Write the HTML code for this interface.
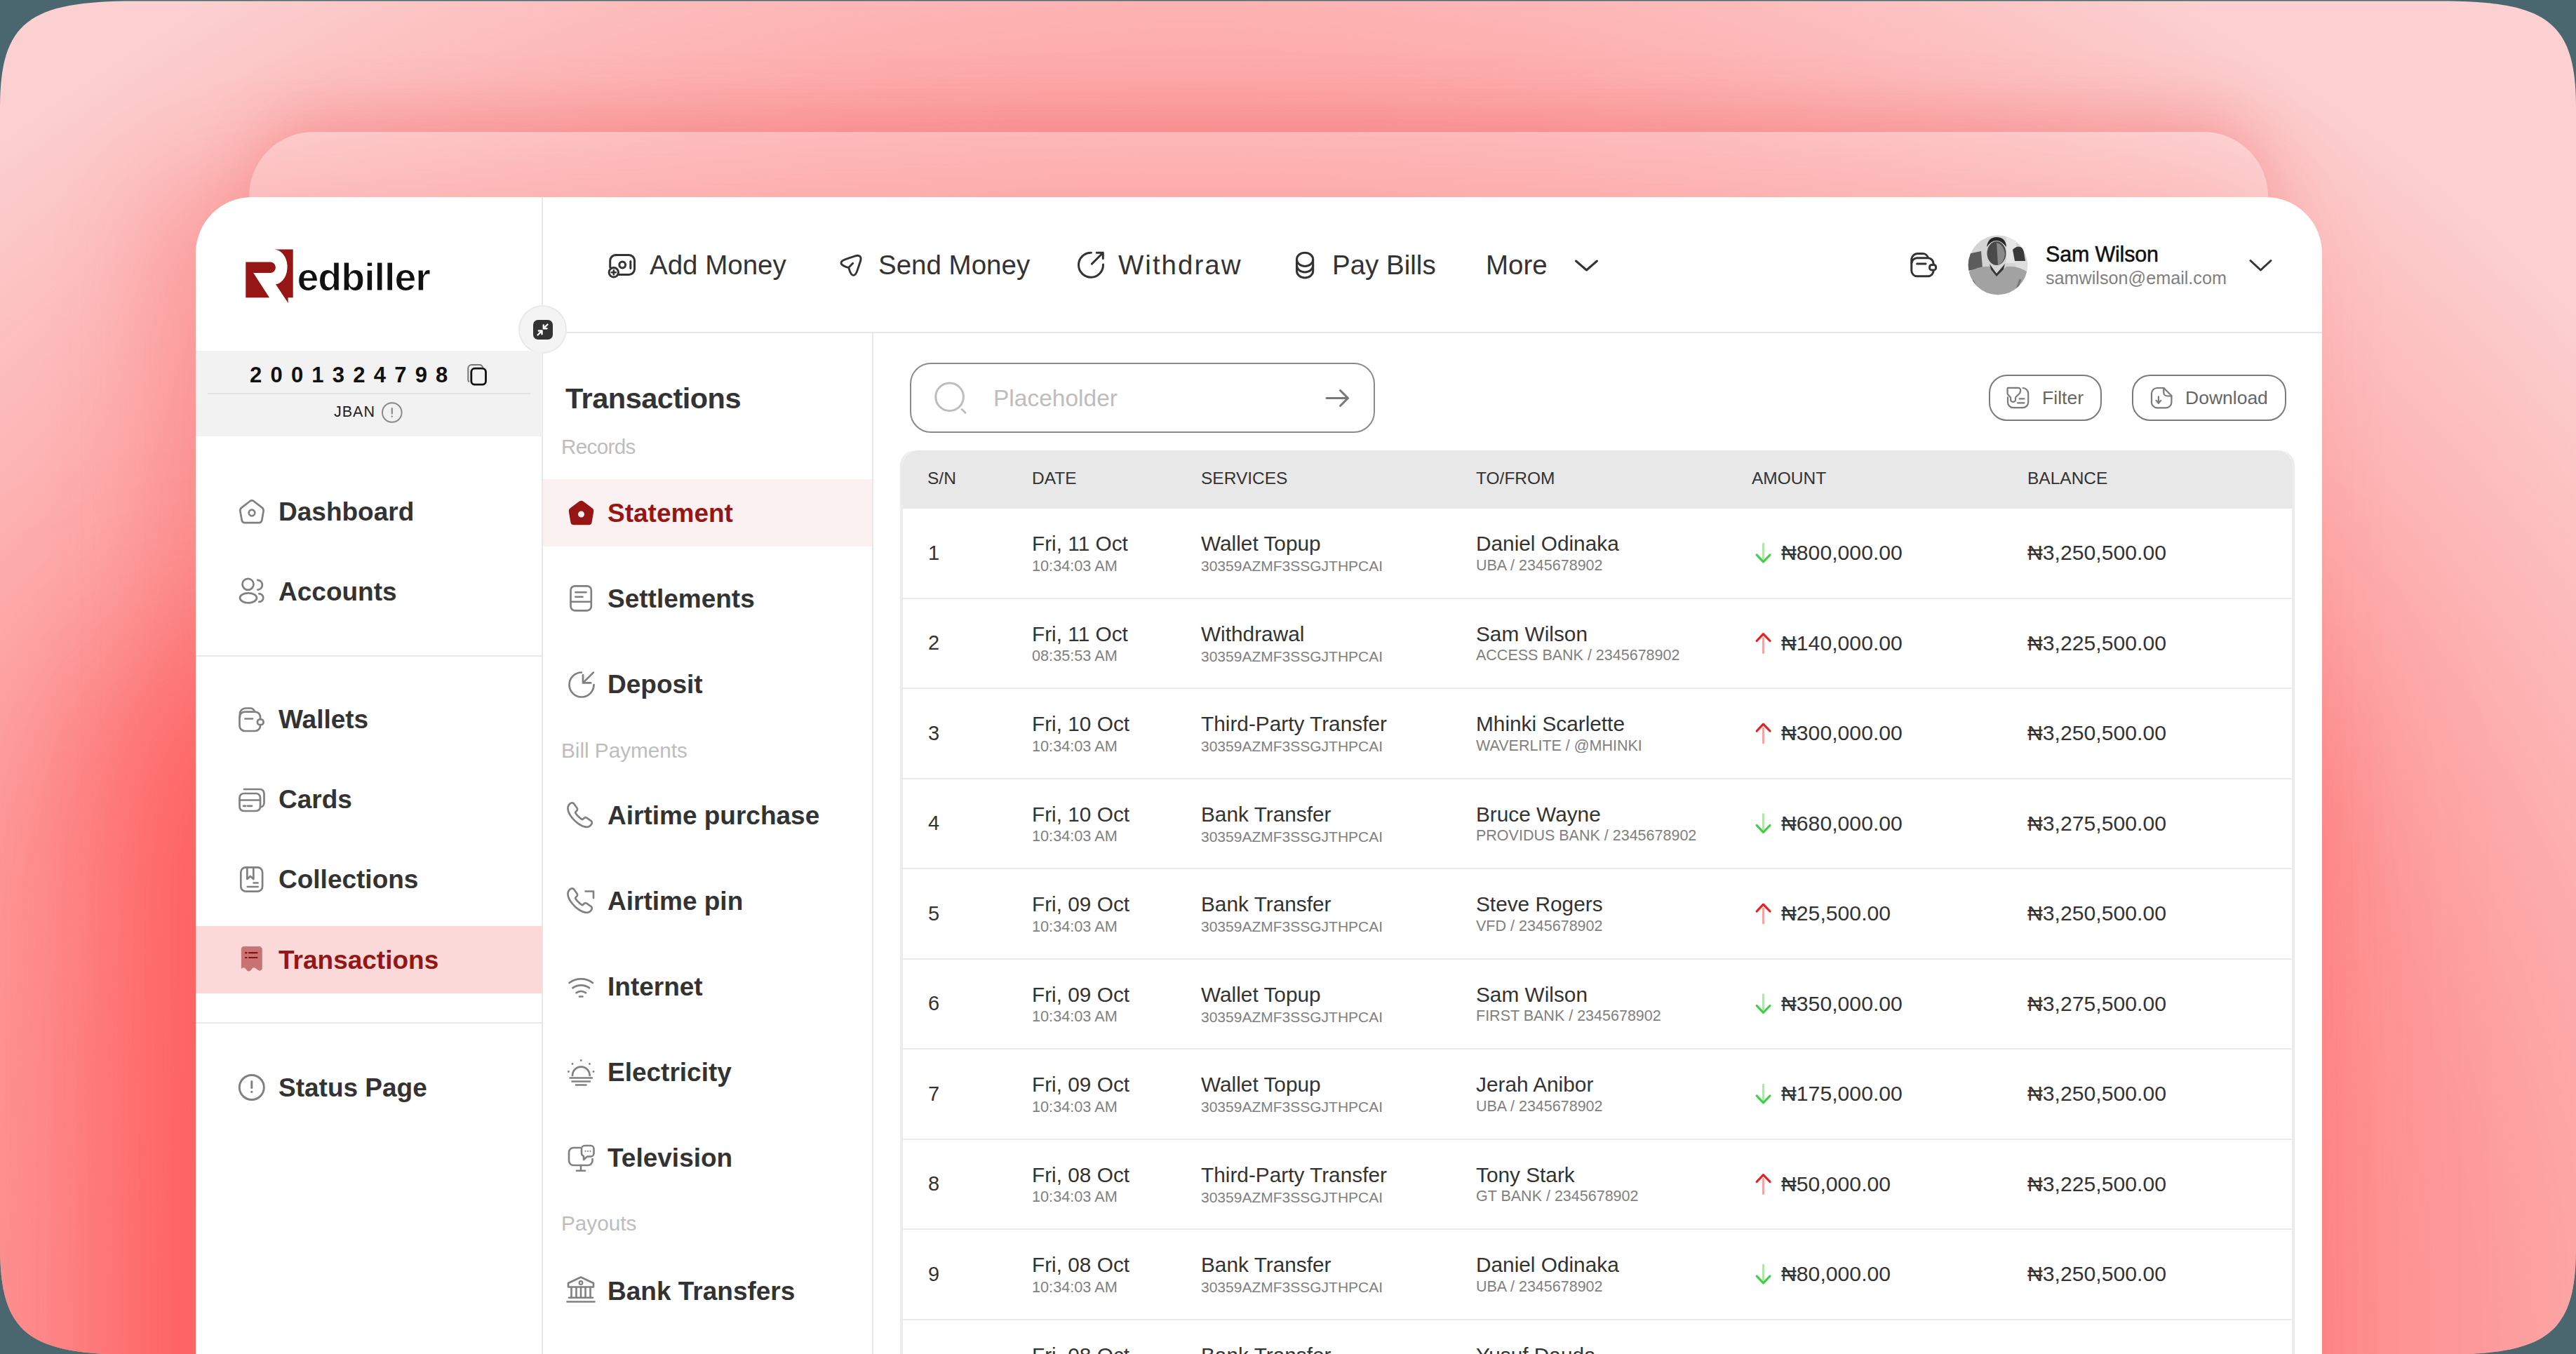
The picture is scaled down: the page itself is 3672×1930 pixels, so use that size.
<!DOCTYPE html>
<html><head><meta charset="utf-8"><style>
html,body{margin:0;padding:0;width:3672px;height:1930px;overflow:hidden;background:#4a676f;}
.t{position:absolute;white-space:nowrap;font-family:"Liberation Sans", sans-serif;}
</style></head><body>
<div style="position:absolute;left:0;top:0;width:3672px;height:1930px;clip-path:path('M0,154 C0,31 41,1.5 193,1.5 H3479 C3631,1.5 3672,31 3672,154 V1778 C3672,1901 3631,1931 3479,1931 H193 C41,1931 0,1901 0,1778 Z');background:#fcd5d5;overflow:hidden;"><div style="position:absolute;left:0;top:0;width:3672px;height:1930px;background:radial-gradient(ellipse 2600px 2300px at 1700px 1930px, rgba(255,96,96,0.95) 0%, rgba(255,96,96,0.5) 70.6%, rgba(255,96,96,0.04) 100%);"></div><div style="position:absolute;left:355px;top:188px;width:2878px;height:1900px;border-radius:92px;box-shadow:0 -40px 90px -20px rgba(235,80,80,0.32);"></div><div style="position:absolute;left:279px;top:281px;width:3031px;height:2000px;border-radius:80px;box-shadow:-110px 700px 300px 40px rgba(255,75,75,0.62), -60px -20px 140px 0px rgba(250,90,90,0.3);"></div><div style="position:absolute;left:355px;top:188px;width:2878px;height:1900px;border-radius:92px;background:rgba(255,245,245,0.28);"></div></div><div style="position:absolute;left:279px;top:281px;width:3031px;height:1800px;background:#fff;border-radius:80px;"></div><div style="position:absolute;left:772px;top:281px;width:2px;height:1700px;background:#e8e8e8;"></div><div style="position:absolute;left:774px;top:473px;width:2536px;height:2px;background:#e6e6e6;"></div><div style="position:absolute;left:1243px;top:475px;width:2px;height:1500px;background:#e8e8e8;"></div><svg style="position:absolute;left:340px;top:345px;" width="80" height="95" viewBox="0 0 80 95" fill="none"><path fill="#961616" d="M10.3 28.5 H46 A7.8 7.8 0 0 1 46 44 H21.2 L44 79.3 H10.3 Z"/><path fill="#961616" d="M50.5 10.5 H77.7 V79.3 H70.5 L70.8 87 L53 60.3 A19 25 0 0 0 50.5 10.5 Z"/></svg><div class="t" style="left:423.5px;top:368.0px;font-size:55.5px;line-height:55.5px;color:#111;font-weight:700;letter-spacing:-1.0px;-webkit-text-stroke:1.0px #fff;">edbiller</div><div style="position:absolute;left:741px;top:437px;width:65px;height:65px;background:#f4f4f4;border-radius:50%;box-shadow:0 0 0 2px #e9e9e9;"></div><div style="position:absolute;left:760px;top:456px;width:28px;height:28px;background:#333;border-radius:7px;"></div><div style="position:absolute;left:279px;top:500px;width:494px;height:122px;background:#f2f2f2;"></div><div style="position:absolute;left:296px;top:560px;width:460px;height:2px;background:#e2e2e2;"></div><div class="t" style="left:356.0px;top:518.8px;font-size:31px;line-height:31px;color:#111;font-weight:700;letter-spacing:1.8px;">2 0 0 1 3 2 4 7 9 8</div><div class="t" style="left:476.0px;top:576.8px;font-size:21.5px;line-height:21.5px;color:#222;font-weight:400;letter-spacing:1px;">JBAN</div><div style="position:absolute;left:279px;top:1320px;width:494px;height:96px;background:#fbd9d9;"></div><div style="position:absolute;left:279px;top:934px;width:494px;height:2px;background:#e8e8e8;"></div><div style="position:absolute;left:279px;top:1457px;width:494px;height:2px;background:#e8e8e8;"></div><div class="t" style="left:397.0px;top:710.7px;font-size:37px;line-height:37px;color:#333;font-weight:700;letter-spacing:0px;">Dashboard</div><div class="t" style="left:397.0px;top:824.7px;font-size:37px;line-height:37px;color:#333;font-weight:700;letter-spacing:0px;">Accounts</div><div class="t" style="left:397.0px;top:1006.7px;font-size:37px;line-height:37px;color:#333;font-weight:700;letter-spacing:0px;">Wallets</div><div class="t" style="left:397.0px;top:1120.7px;font-size:37px;line-height:37px;color:#333;font-weight:700;letter-spacing:0px;">Cards</div><div class="t" style="left:397.0px;top:1234.7px;font-size:37px;line-height:37px;color:#333;font-weight:700;letter-spacing:0px;">Collections</div><div class="t" style="left:397.0px;top:1349.7px;font-size:37px;line-height:37px;color:#961616;font-weight:700;letter-spacing:0px;">Transactions</div><div class="t" style="left:397.0px;top:1531.7px;font-size:37px;line-height:37px;color:#333;font-weight:700;letter-spacing:0px;">Status Page</div><div class="t" style="left:926.0px;top:359.4px;font-size:38.5px;line-height:38.5px;color:#333;font-weight:400;letter-spacing:0px;">Add Money</div><div class="t" style="left:1252.0px;top:359.4px;font-size:38.5px;line-height:38.5px;color:#333;font-weight:400;letter-spacing:0px;">Send Money</div><div class="t" style="left:1594.0px;top:359.4px;font-size:38.5px;line-height:38.5px;color:#333;font-weight:400;letter-spacing:2.0px;">Withdraw</div><div class="t" style="left:1899.0px;top:359.4px;font-size:38.5px;line-height:38.5px;color:#333;font-weight:400;letter-spacing:0px;">Pay Bills</div><div class="t" style="left:2118.0px;top:359.4px;font-size:38.5px;line-height:38.5px;color:#333;font-weight:400;letter-spacing:0px;">More</div><div class="t" style="left:2916.0px;top:347.2px;font-size:30.5px;line-height:30.5px;color:#111;font-weight:400;letter-spacing:-0.2px;-webkit-text-stroke:0.5px #111;">Sam Wilson</div><div class="t" style="left:2916.0px;top:383.7px;font-size:25.2px;line-height:25.2px;color:#808080;font-weight:400;letter-spacing:0px;">samwilson@email.com</div><div class="t" style="left:806.0px;top:546.9px;font-size:41.5px;line-height:41.5px;color:#333;font-weight:700;letter-spacing:-0.5px;">Transactions</div><div class="t" style="left:800.0px;top:622.0px;font-size:29.5px;line-height:29.5px;color:#bdbdbd;font-weight:400;letter-spacing:-0.6px;">Records</div><div style="position:absolute;left:774px;top:683px;width:469px;height:96px;background:#fcf1f1;"></div><div class="t" style="left:866.0px;top:712.7px;font-size:37px;line-height:37px;color:#961616;font-weight:700;letter-spacing:0px;">Statement</div><div class="t" style="left:866.0px;top:834.7px;font-size:37px;line-height:37px;color:#333;font-weight:700;letter-spacing:0px;">Settlements</div><div class="t" style="left:866.0px;top:956.7px;font-size:37px;line-height:37px;color:#333;font-weight:700;letter-spacing:0px;">Deposit</div><div class="t" style="left:866.0px;top:1143.7px;font-size:37px;line-height:37px;color:#333;font-weight:700;letter-spacing:0px;">Airtime purchase</div><div class="t" style="left:866.0px;top:1265.7px;font-size:37px;line-height:37px;color:#333;font-weight:700;letter-spacing:0px;">Airtime pin</div><div class="t" style="left:866.0px;top:1387.7px;font-size:37px;line-height:37px;color:#333;font-weight:700;letter-spacing:0px;">Internet</div><div class="t" style="left:866.0px;top:1509.7px;font-size:37px;line-height:37px;color:#333;font-weight:700;letter-spacing:0px;">Electricity</div><div class="t" style="left:866.0px;top:1631.7px;font-size:37px;line-height:37px;color:#333;font-weight:700;letter-spacing:0px;">Television</div><div class="t" style="left:866.0px;top:1821.7px;font-size:37px;line-height:37px;color:#333;font-weight:700;letter-spacing:0px;">Bank Transfers</div><div class="t" style="left:800.0px;top:1054.9px;font-size:29.7px;line-height:29.7px;color:#bdbdbd;font-weight:400;letter-spacing:0px;">Bill Payments</div><div class="t" style="left:800.0px;top:1729.4px;font-size:29.7px;line-height:29.7px;color:#bdbdbd;font-weight:400;letter-spacing:0px;">Payouts</div><div style="position:absolute;left:1297px;top:517px;width:663px;height:100px;box-sizing:border-box;border:2px solid #8a8a8a;border-radius:30px;"></div><div class="t" style="left:1416.0px;top:550.6px;font-size:33.5px;line-height:33.5px;color:#bdbdbd;font-weight:400;letter-spacing:0px;">Placeholder</div><div style="position:absolute;left:2835px;top:534px;width:161px;height:66px;box-sizing:border-box;border:2px solid #7a7a7a;border-radius:26px;"></div><div style="position:absolute;left:3039px;top:534px;width:220px;height:66px;box-sizing:border-box;border:2px solid #7a7a7a;border-radius:26px;"></div><div class="t" style="left:2911.0px;top:553.5px;font-size:26.6px;line-height:26.6px;color:#666;font-weight:400;letter-spacing:0px;">Filter</div><div class="t" style="left:3115.0px;top:553.6px;font-size:26.5px;line-height:26.5px;color:#666;font-weight:400;letter-spacing:0px;">Download</div><div style="position:absolute;left:1283px;top:642px;width:1988px;height:1400px;box-sizing:border-box;border:4px solid #ececec;border-top:0;border-radius:22px;background:#fff;box-shadow:0 0 2px 0 rgba(0,0,0,0.05);"></div><div style="position:absolute;left:1287px;top:642px;width:1980px;height:83px;background:#e8e8e8;border-radius:21px 21px 0 0;"></div><div class="t" style="left:1322.0px;top:670.3px;font-size:24.5px;line-height:24.5px;color:#333;font-weight:400;letter-spacing:0px;">S/N</div><div class="t" style="left:1471.0px;top:670.3px;font-size:24.5px;line-height:24.5px;color:#333;font-weight:400;letter-spacing:0px;">DATE</div><div class="t" style="left:1712.0px;top:670.3px;font-size:24.5px;line-height:24.5px;color:#333;font-weight:400;letter-spacing:0px;">SERVICES</div><div class="t" style="left:2104.0px;top:670.3px;font-size:24.5px;line-height:24.5px;color:#333;font-weight:400;letter-spacing:0px;">TO/FROM</div><div class="t" style="left:2497.0px;top:670.3px;font-size:24.5px;line-height:24.5px;color:#333;font-weight:400;letter-spacing:0px;">AMOUNT</div><div class="t" style="left:2890.0px;top:670.3px;font-size:24.5px;line-height:24.5px;color:#333;font-weight:400;letter-spacing:0px;">BALANCE</div><div class="t" style="left:1323.0px;top:773.6px;font-size:29px;line-height:29px;color:#333;font-weight:400;letter-spacing:0px;">1</div><div class="t" style="left:1471.0px;top:760.4px;font-size:29.8px;line-height:29.8px;color:#333;font-weight:400;letter-spacing:0px;">Fri, 11 Oct</div><div class="t" style="left:1471.0px;top:795.7px;font-size:21.7px;line-height:21.7px;color:#808080;font-weight:400;letter-spacing:0px;">10:34:03 AM</div><div class="t" style="left:1712.0px;top:760.4px;font-size:29.8px;line-height:29.8px;color:#333;font-weight:400;letter-spacing:0px;">Wallet Topup</div><div class="t" style="left:1712.0px;top:796.3px;font-size:21px;line-height:21px;color:#808080;font-weight:400;letter-spacing:0px;">30359AZMF3SSGJTHPCAI</div><div class="t" style="left:2104.0px;top:760.4px;font-size:29.8px;line-height:29.8px;color:#333;font-weight:400;letter-spacing:0px;">Daniel Odinaka</div><div class="t" style="left:2104.0px;top:795.9px;font-size:21.5px;line-height:21.5px;color:#808080;font-weight:400;letter-spacing:0px;">UBA / 2345678902</div><div class="t" style="left:2539.0px;top:773.0px;font-size:30.2px;line-height:30.2px;color:#333;font-weight:400;letter-spacing:0px;">₦800,000.00</div><div class="t" style="left:2890.0px;top:773.0px;font-size:30.2px;line-height:30.2px;color:#333;font-weight:400;letter-spacing:0px;">₦3,250,500.00</div><div style="position:absolute;left:1287px;top:852px;width:1980px;height:2px;background:#ebebeb;"></div><div class="t" style="left:1323.0px;top:902.1px;font-size:29px;line-height:29px;color:#333;font-weight:400;letter-spacing:0px;">2</div><div class="t" style="left:1471.0px;top:888.9px;font-size:29.8px;line-height:29.8px;color:#333;font-weight:400;letter-spacing:0px;">Fri, 11 Oct</div><div class="t" style="left:1471.0px;top:924.2px;font-size:21.7px;line-height:21.7px;color:#808080;font-weight:400;letter-spacing:0px;">08:35:53 AM</div><div class="t" style="left:1712.0px;top:888.9px;font-size:29.8px;line-height:29.8px;color:#333;font-weight:400;letter-spacing:0px;">Withdrawal</div><div class="t" style="left:1712.0px;top:924.8px;font-size:21px;line-height:21px;color:#808080;font-weight:400;letter-spacing:0px;">30359AZMF3SSGJTHPCAI</div><div class="t" style="left:2104.0px;top:888.9px;font-size:29.8px;line-height:29.8px;color:#333;font-weight:400;letter-spacing:0px;">Sam Wilson</div><div class="t" style="left:2104.0px;top:924.4px;font-size:21.5px;line-height:21.5px;color:#808080;font-weight:400;letter-spacing:0px;">ACCESS BANK / 2345678902</div><div class="t" style="left:2539.0px;top:901.5px;font-size:30.2px;line-height:30.2px;color:#333;font-weight:400;letter-spacing:0px;">₦140,000.00</div><div class="t" style="left:2890.0px;top:901.5px;font-size:30.2px;line-height:30.2px;color:#333;font-weight:400;letter-spacing:0px;">₦3,225,500.00</div><div style="position:absolute;left:1287px;top:980px;width:1980px;height:2px;background:#ebebeb;"></div><div class="t" style="left:1323.0px;top:1030.6px;font-size:29px;line-height:29px;color:#333;font-weight:400;letter-spacing:0px;">3</div><div class="t" style="left:1471.0px;top:1017.4px;font-size:29.8px;line-height:29.8px;color:#333;font-weight:400;letter-spacing:0px;">Fri, 10 Oct</div><div class="t" style="left:1471.0px;top:1052.7px;font-size:21.7px;line-height:21.7px;color:#808080;font-weight:400;letter-spacing:0px;">10:34:03 AM</div><div class="t" style="left:1712.0px;top:1017.4px;font-size:29.8px;line-height:29.8px;color:#333;font-weight:400;letter-spacing:0px;">Third-Party Transfer</div><div class="t" style="left:1712.0px;top:1053.3px;font-size:21px;line-height:21px;color:#808080;font-weight:400;letter-spacing:0px;">30359AZMF3SSGJTHPCAI</div><div class="t" style="left:2104.0px;top:1017.4px;font-size:29.8px;line-height:29.8px;color:#333;font-weight:400;letter-spacing:0px;">Mhinki Scarlette</div><div class="t" style="left:2104.0px;top:1052.9px;font-size:21.5px;line-height:21.5px;color:#808080;font-weight:400;letter-spacing:0px;">WAVERLITE / @MHINKI</div><div class="t" style="left:2539.0px;top:1030.0px;font-size:30.2px;line-height:30.2px;color:#333;font-weight:400;letter-spacing:0px;">₦300,000.00</div><div class="t" style="left:2890.0px;top:1030.0px;font-size:30.2px;line-height:30.2px;color:#333;font-weight:400;letter-spacing:0px;">₦3,250,500.00</div><div style="position:absolute;left:1287px;top:1109px;width:1980px;height:2px;background:#ebebeb;"></div><div class="t" style="left:1323.0px;top:1159.1px;font-size:29px;line-height:29px;color:#333;font-weight:400;letter-spacing:0px;">4</div><div class="t" style="left:1471.0px;top:1145.9px;font-size:29.8px;line-height:29.8px;color:#333;font-weight:400;letter-spacing:0px;">Fri, 10 Oct</div><div class="t" style="left:1471.0px;top:1181.2px;font-size:21.7px;line-height:21.7px;color:#808080;font-weight:400;letter-spacing:0px;">10:34:03 AM</div><div class="t" style="left:1712.0px;top:1145.9px;font-size:29.8px;line-height:29.8px;color:#333;font-weight:400;letter-spacing:0px;">Bank Transfer</div><div class="t" style="left:1712.0px;top:1181.8px;font-size:21px;line-height:21px;color:#808080;font-weight:400;letter-spacing:0px;">30359AZMF3SSGJTHPCAI</div><div class="t" style="left:2104.0px;top:1145.9px;font-size:29.8px;line-height:29.8px;color:#333;font-weight:400;letter-spacing:0px;">Bruce Wayne</div><div class="t" style="left:2104.0px;top:1181.4px;font-size:21.5px;line-height:21.5px;color:#808080;font-weight:400;letter-spacing:0px;">PROVIDUS BANK / 2345678902</div><div class="t" style="left:2539.0px;top:1158.5px;font-size:30.2px;line-height:30.2px;color:#333;font-weight:400;letter-spacing:0px;">₦680,000.00</div><div class="t" style="left:2890.0px;top:1158.5px;font-size:30.2px;line-height:30.2px;color:#333;font-weight:400;letter-spacing:0px;">₦3,275,500.00</div><div style="position:absolute;left:1287px;top:1237px;width:1980px;height:2px;background:#ebebeb;"></div><div class="t" style="left:1323.0px;top:1287.6px;font-size:29px;line-height:29px;color:#333;font-weight:400;letter-spacing:0px;">5</div><div class="t" style="left:1471.0px;top:1274.4px;font-size:29.8px;line-height:29.8px;color:#333;font-weight:400;letter-spacing:0px;">Fri, 09 Oct</div><div class="t" style="left:1471.0px;top:1309.7px;font-size:21.7px;line-height:21.7px;color:#808080;font-weight:400;letter-spacing:0px;">10:34:03 AM</div><div class="t" style="left:1712.0px;top:1274.4px;font-size:29.8px;line-height:29.8px;color:#333;font-weight:400;letter-spacing:0px;">Bank Transfer</div><div class="t" style="left:1712.0px;top:1310.3px;font-size:21px;line-height:21px;color:#808080;font-weight:400;letter-spacing:0px;">30359AZMF3SSGJTHPCAI</div><div class="t" style="left:2104.0px;top:1274.4px;font-size:29.8px;line-height:29.8px;color:#333;font-weight:400;letter-spacing:0px;">Steve Rogers</div><div class="t" style="left:2104.0px;top:1309.9px;font-size:21.5px;line-height:21.5px;color:#808080;font-weight:400;letter-spacing:0px;">VFD / 2345678902</div><div class="t" style="left:2539.0px;top:1287.0px;font-size:30.2px;line-height:30.2px;color:#333;font-weight:400;letter-spacing:0px;">₦25,500.00</div><div class="t" style="left:2890.0px;top:1287.0px;font-size:30.2px;line-height:30.2px;color:#333;font-weight:400;letter-spacing:0px;">₦3,250,500.00</div><div style="position:absolute;left:1287px;top:1366px;width:1980px;height:2px;background:#ebebeb;"></div><div class="t" style="left:1323.0px;top:1416.1px;font-size:29px;line-height:29px;color:#333;font-weight:400;letter-spacing:0px;">6</div><div class="t" style="left:1471.0px;top:1402.9px;font-size:29.8px;line-height:29.8px;color:#333;font-weight:400;letter-spacing:0px;">Fri, 09 Oct</div><div class="t" style="left:1471.0px;top:1438.2px;font-size:21.7px;line-height:21.7px;color:#808080;font-weight:400;letter-spacing:0px;">10:34:03 AM</div><div class="t" style="left:1712.0px;top:1402.9px;font-size:29.8px;line-height:29.8px;color:#333;font-weight:400;letter-spacing:0px;">Wallet Topup</div><div class="t" style="left:1712.0px;top:1438.8px;font-size:21px;line-height:21px;color:#808080;font-weight:400;letter-spacing:0px;">30359AZMF3SSGJTHPCAI</div><div class="t" style="left:2104.0px;top:1402.9px;font-size:29.8px;line-height:29.8px;color:#333;font-weight:400;letter-spacing:0px;">Sam Wilson</div><div class="t" style="left:2104.0px;top:1438.4px;font-size:21.5px;line-height:21.5px;color:#808080;font-weight:400;letter-spacing:0px;">FIRST BANK / 2345678902</div><div class="t" style="left:2539.0px;top:1415.5px;font-size:30.2px;line-height:30.2px;color:#333;font-weight:400;letter-spacing:0px;">₦350,000.00</div><div class="t" style="left:2890.0px;top:1415.5px;font-size:30.2px;line-height:30.2px;color:#333;font-weight:400;letter-spacing:0px;">₦3,275,500.00</div><div style="position:absolute;left:1287px;top:1494px;width:1980px;height:2px;background:#ebebeb;"></div><div class="t" style="left:1323.0px;top:1544.6px;font-size:29px;line-height:29px;color:#333;font-weight:400;letter-spacing:0px;">7</div><div class="t" style="left:1471.0px;top:1531.4px;font-size:29.8px;line-height:29.8px;color:#333;font-weight:400;letter-spacing:0px;">Fri, 09 Oct</div><div class="t" style="left:1471.0px;top:1566.7px;font-size:21.7px;line-height:21.7px;color:#808080;font-weight:400;letter-spacing:0px;">10:34:03 AM</div><div class="t" style="left:1712.0px;top:1531.4px;font-size:29.8px;line-height:29.8px;color:#333;font-weight:400;letter-spacing:0px;">Wallet Topup</div><div class="t" style="left:1712.0px;top:1567.3px;font-size:21px;line-height:21px;color:#808080;font-weight:400;letter-spacing:0px;">30359AZMF3SSGJTHPCAI</div><div class="t" style="left:2104.0px;top:1531.4px;font-size:29.8px;line-height:29.8px;color:#333;font-weight:400;letter-spacing:0px;">Jerah Anibor</div><div class="t" style="left:2104.0px;top:1566.9px;font-size:21.5px;line-height:21.5px;color:#808080;font-weight:400;letter-spacing:0px;">UBA / 2345678902</div><div class="t" style="left:2539.0px;top:1544.0px;font-size:30.2px;line-height:30.2px;color:#333;font-weight:400;letter-spacing:0px;">₦175,000.00</div><div class="t" style="left:2890.0px;top:1544.0px;font-size:30.2px;line-height:30.2px;color:#333;font-weight:400;letter-spacing:0px;">₦3,250,500.00</div><div style="position:absolute;left:1287px;top:1623px;width:1980px;height:2px;background:#ebebeb;"></div><div class="t" style="left:1323.0px;top:1673.1px;font-size:29px;line-height:29px;color:#333;font-weight:400;letter-spacing:0px;">8</div><div class="t" style="left:1471.0px;top:1659.9px;font-size:29.8px;line-height:29.8px;color:#333;font-weight:400;letter-spacing:0px;">Fri, 08 Oct</div><div class="t" style="left:1471.0px;top:1695.2px;font-size:21.7px;line-height:21.7px;color:#808080;font-weight:400;letter-spacing:0px;">10:34:03 AM</div><div class="t" style="left:1712.0px;top:1659.9px;font-size:29.8px;line-height:29.8px;color:#333;font-weight:400;letter-spacing:0px;">Third-Party Transfer</div><div class="t" style="left:1712.0px;top:1695.8px;font-size:21px;line-height:21px;color:#808080;font-weight:400;letter-spacing:0px;">30359AZMF3SSGJTHPCAI</div><div class="t" style="left:2104.0px;top:1659.9px;font-size:29.8px;line-height:29.8px;color:#333;font-weight:400;letter-spacing:0px;">Tony Stark</div><div class="t" style="left:2104.0px;top:1695.4px;font-size:21.5px;line-height:21.5px;color:#808080;font-weight:400;letter-spacing:0px;">GT BANK / 2345678902</div><div class="t" style="left:2539.0px;top:1672.5px;font-size:30.2px;line-height:30.2px;color:#333;font-weight:400;letter-spacing:0px;">₦50,000.00</div><div class="t" style="left:2890.0px;top:1672.5px;font-size:30.2px;line-height:30.2px;color:#333;font-weight:400;letter-spacing:0px;">₦3,225,500.00</div><div style="position:absolute;left:1287px;top:1751px;width:1980px;height:2px;background:#ebebeb;"></div><div class="t" style="left:1323.0px;top:1801.6px;font-size:29px;line-height:29px;color:#333;font-weight:400;letter-spacing:0px;">9</div><div class="t" style="left:1471.0px;top:1788.4px;font-size:29.8px;line-height:29.8px;color:#333;font-weight:400;letter-spacing:0px;">Fri, 08 Oct</div><div class="t" style="left:1471.0px;top:1823.7px;font-size:21.7px;line-height:21.7px;color:#808080;font-weight:400;letter-spacing:0px;">10:34:03 AM</div><div class="t" style="left:1712.0px;top:1788.4px;font-size:29.8px;line-height:29.8px;color:#333;font-weight:400;letter-spacing:0px;">Bank Transfer</div><div class="t" style="left:1712.0px;top:1824.3px;font-size:21px;line-height:21px;color:#808080;font-weight:400;letter-spacing:0px;">30359AZMF3SSGJTHPCAI</div><div class="t" style="left:2104.0px;top:1788.4px;font-size:29.8px;line-height:29.8px;color:#333;font-weight:400;letter-spacing:0px;">Daniel Odinaka</div><div class="t" style="left:2104.0px;top:1823.9px;font-size:21.5px;line-height:21.5px;color:#808080;font-weight:400;letter-spacing:0px;">UBA / 2345678902</div><div class="t" style="left:2539.0px;top:1801.0px;font-size:30.2px;line-height:30.2px;color:#333;font-weight:400;letter-spacing:0px;">₦80,000.00</div><div class="t" style="left:2890.0px;top:1801.0px;font-size:30.2px;line-height:30.2px;color:#333;font-weight:400;letter-spacing:0px;">₦3,250,500.00</div><div style="position:absolute;left:1287px;top:1880px;width:1980px;height:2px;background:#ebebeb;"></div><div class="t" style="left:1323.0px;top:1930.1px;font-size:29px;line-height:29px;color:#333;font-weight:400;letter-spacing:0px;">10</div><div class="t" style="left:1471.0px;top:1916.9px;font-size:29.8px;line-height:29.8px;color:#333;font-weight:400;letter-spacing:0px;">Fri, 08 Oct</div><div class="t" style="left:1471.0px;top:1952.2px;font-size:21.7px;line-height:21.7px;color:#808080;font-weight:400;letter-spacing:0px;">10:34:03 AM</div><div class="t" style="left:1712.0px;top:1916.9px;font-size:29.8px;line-height:29.8px;color:#333;font-weight:400;letter-spacing:0px;">Bank Transfer</div><div class="t" style="left:1712.0px;top:1952.8px;font-size:21px;line-height:21px;color:#808080;font-weight:400;letter-spacing:0px;">30359AZMF3SSGJTHPCAI</div><div class="t" style="left:2104.0px;top:1916.9px;font-size:29.8px;line-height:29.8px;color:#333;font-weight:400;letter-spacing:0px;">Yusuf Dauda</div><div class="t" style="left:2104.0px;top:1952.4px;font-size:21.5px;line-height:21.5px;color:#808080;font-weight:400;letter-spacing:0px;">UBA / 2345678902</div><div class="t" style="left:2539.0px;top:1929.5px;font-size:30.2px;line-height:30.2px;color:#333;font-weight:400;letter-spacing:0px;">₦80,000.00</div><div class="t" style="left:2890.0px;top:1929.5px;font-size:30.2px;line-height:30.2px;color:#333;font-weight:400;letter-spacing:0px;">₦3,250,500.00</div><svg style="position:absolute;left:0;top:0" width="3672" height="1930" viewBox="0 0 3672 1930"><path d="M18.5,41.5 H36.5 A8,8 0 0 0 44.5,33.5 V21.5 A8,8 0 0 0 36.5,13.5 H17.7 A8,8 0 0 0 9.7,21.5 V31" stroke="#333333" stroke-width="3.0" fill="none" stroke-linecap="round" stroke-linejoin="round" transform="translate(860,350)"/><circle cx="887.2" cy="377.5" r="4.4" stroke="#333333" stroke-width="3.0" fill="none"/><path d="M898.8,372.4 V382.6" stroke="#333333" stroke-width="3.0" fill="none" stroke-linecap="round" stroke-linejoin="round" /><circle cx="874.8" cy="388.3" r="6.7" stroke="#333333" stroke-width="3.0" fill="#fff"/><path d="M871.8,388.3 H877.8 M874.8,385.3 V391.3" stroke="#333333" stroke-width="2.6" fill="none" stroke-linecap="round" stroke-linejoin="round" /><g transform="translate(1194.1,359.4) scale(1.58)"><path d="M7.4 6.32L15.89 3.49C19.7 2.22 21.77 4.3 20.51 8.11L17.68 16.6C15.78 22.31 12.66 22.31 10.76 16.6L9.92 14.08L7.4 13.24C1.69 11.34 1.69 8.23 7.4 6.32Z M10.11 13.65L13.69 10.06" stroke="#333" stroke-width="1.85" fill="none" stroke-linecap="round" stroke-linejoin="round"/></g><path d="M1555.5,360.2 A17.5,17.5 0 1 0 1572.5,377" stroke="#333333" stroke-width="3.0" fill="none" stroke-linecap="round" stroke-linejoin="round" /><path d="M1556.4,376.1 L1572.3,360.2 M1563.2,360.2 H1572.3 V368.6" stroke="#333333" stroke-width="3.0" fill="none" stroke-linecap="round" stroke-linejoin="round" /><path d="M1848.5,369.8 A11.6,9.6 0 0 1 1871.7,369.8 A11.6,9.6 0 0 1 1848.5,369.8 Z" stroke="#333333" stroke-width="3.0" fill="none" stroke-linecap="round" stroke-linejoin="round" /><path d="M1848.5,369.8 V386.3 A11.6,9.6 0 0 0 1871.7,386.3 V369.8" stroke="#333333" stroke-width="3.0" fill="none" stroke-linecap="round" stroke-linejoin="round" /><path d="M1848.5,378.3 A11.6,9.6 0 0 0 1871.7,378.3" stroke="#333333" stroke-width="3.0" fill="none" stroke-linecap="round" stroke-linejoin="round" /><path d="M2246.5,372 L2261.5,385 L2276.5,372" stroke="#333333" stroke-width="3.0" fill="none" stroke-linecap="round" stroke-linejoin="round" /><path d="M2724.8,375 V369 A9,9 0 0 1 2733.8,361.5 H2740.5 A8,8 0 0 1 2748.5,367.5" stroke="#333333" stroke-width="3.0" fill="none" stroke-linecap="round" stroke-linejoin="round" /><path d="M2732.8,367.8 H2748.1 A8,8 0 0 1 2756.1,375.8 V385.8 A8,8 0 0 1 2748.1,393.8 H2732.8 A8,8 0 0 1 2724.8,385.8 V375.8 A8,8 0 0 1 2732.8,367.8 Z" stroke="#333333" stroke-width="3.0" fill="none" stroke-linecap="round" stroke-linejoin="round" /><path d="M2732.6,376 H2745" stroke="#333333" stroke-width="3.0" fill="none" stroke-linecap="round" stroke-linejoin="round" /><rect x="2750.6" y="377.5" width="9" height="7.4" rx="3" stroke="#333" stroke-width="3" fill="#fff"/><path d="M3208,371.5 L3222.5,385 L3237,371.5" stroke="#333333" stroke-width="3.0" fill="none" stroke-linecap="round" stroke-linejoin="round" /><path d="M780.5,462.5 L774.8,468.2 M774.8,463.5 V468.2 H779.5" stroke="#fff" stroke-width="2.4" fill="none" stroke-linecap="round" stroke-linejoin="round" /><path d="M766.5,477.5 L772.5,471.5 M767.8,471.5 H772.5 V476.2" stroke="#fff" stroke-width="2.4" fill="none" stroke-linecap="round" stroke-linejoin="round" /><rect x="671.8" y="525.2" width="20.7" height="23" rx="5" stroke="#111" stroke-width="2.8" fill="none"/><path d="M668.2,544 A5,5 0 0 1 667.3,541 V525 A5,5 0 0 1 672.3,520 H683 A5,5 0 0 1 688,523.5" stroke="#777" stroke-width="2.0" fill="none" stroke-linecap="round" stroke-linejoin="round" /><circle cx="558.8" cy="588" r="13.8" stroke="#8a8a8a" stroke-width="2.0" fill="none"/><path d="M558.8,582.2 V589.6" stroke="#8a8a8a" stroke-width="2.2" fill="none" stroke-linecap="round" stroke-linejoin="round" /><circle cx="558.8" cy="593.6" r="1.2" stroke="#8a8a8a" stroke-width="0" fill="#8a8a8a"/><circle cx="1353.6" cy="565.8" r="19.8" stroke="#bdbdbd" stroke-width="3.0" fill="none"/><path d="M1371.1,583.5 L1376,588.3" stroke="#bdbdbd" stroke-width="3.0" fill="none" stroke-linecap="round" stroke-linejoin="round" /><path d="M1891,567.5 H1921.5 M1910.5,556.5 L1921.5,567.5 L1910.5,578.5" stroke="#777" stroke-width="3.0" fill="none" stroke-linecap="round" stroke-linejoin="round" /><path d="M2862.1,552.8 H2876.5 A3.5,3.5 0 0 1 2879.5,558.5 V560 L2873.5,566 A3,3 0 0 0 2873,568 V570.5 A3.6,3.6 0 0 1 2866.2,570.5 V567.5 A3,3 0 0 0 2865.5,566 L2862.3,562.5 A4,4 0 0 1 2861.6,559 V556 A3.3,3.3 0 0 1 2862.1,552.8 Z" stroke="#7a7a7a" stroke-width="2.2" fill="none" stroke-linecap="round" stroke-linejoin="round" /><path d="M2883.6,553 A8,8 0 0 1 2891.2,561 V573.2 A8,8 0 0 1 2883.2,581.2 H2870 A8,8 0 0 1 2862,573.2 V566.3" stroke="#7a7a7a" stroke-width="2.2" fill="none" stroke-linecap="round" stroke-linejoin="round" /><path d="M2878.6,568.4 H2885.5 M2876,574.3 H2885.5" stroke="#7a7a7a" stroke-width="2.2" fill="none" stroke-linecap="round" stroke-linejoin="round" /><path d="M3084.3,553 H3075 A8,8 0 0 0 3067,561 V573.4 A8,8 0 0 0 3075,581.4 H3087.4 A8,8 0 0 0 3095.4,573.4 V564 Z" stroke="#7a7a7a" stroke-width="2.2" fill="none" stroke-linecap="round" stroke-linejoin="round" /><path d="M3084.3,553 V559.5 A5,5 0 0 0 3089.3,564.5 H3095.4" stroke="#7a7a7a" stroke-width="2.2" fill="none" stroke-linecap="round" stroke-linejoin="round" /><path d="M3076.9,565.3 V574.9 M3073.6,570.9 L3076.9,574.9 L3080.2,570.9" stroke="#7a7a7a" stroke-width="2.2" fill="none" stroke-linecap="round" stroke-linejoin="round" /><path d="M356.5,714.2 Q359,712.4 361.5,714.2 L373.6,723.6 Q376,725.5 375.6,728.4 L373.3,741.5 Q372.6,745.2 369,745.2 H349 Q345.4,745.2 344.7,741.5 L342.4,728.4 Q342,725.5 344.4,723.6 Z" stroke="#808080" stroke-width="2.7" fill="none" stroke-linecap="round" stroke-linejoin="round" /><circle cx="359" cy="731" r="4.3" stroke="#808080" stroke-width="2.7" fill="none"/><circle cx="353.5" cy="832.8" r="8.0" stroke="#808080" stroke-width="2.7" fill="none"/><ellipse cx="354" cy="852.3" rx="12" ry="7" stroke="#808080" stroke-width="2.7" fill="none"/><path d="M367.3,826.8 A6.5,6.8 0 0 1 367.3,840.6" stroke="#808080" stroke-width="2.7" fill="none" stroke-linecap="round" stroke-linejoin="round" /><path d="M369.3,846.3 A6,5.8 0 0 1 369.3,857.9" stroke="#808080" stroke-width="2.7" fill="none" stroke-linecap="round" stroke-linejoin="round" /><path d="M342,1022 V1017 A8,8 0 0 1 350,1009.5 H356 A7,7 0 0 1 363,1014.5" stroke="#808080" stroke-width="2.7" fill="none" stroke-linecap="round" stroke-linejoin="round" /><path d="M349,1014.6 H363.5 A7.5,7.5 0 0 1 371,1022.1 V1034.5 A7.5,7.5 0 0 1 363.5,1042 H349 A7.5,7.5 0 0 1 341.5,1034.5 V1022.1 A7.5,7.5 0 0 1 349,1014.6 Z" stroke="#808080" stroke-width="2.7" fill="none" stroke-linecap="round" stroke-linejoin="round" /><path d="M349.5,1024.5 H360" stroke="#808080" stroke-width="2.7" fill="none" stroke-linecap="round" stroke-linejoin="round" /><rect x="367" y="1025.5" width="8.5" height="7.5" rx="3" stroke="#808080" stroke-width="2.7" fill="#fff"/><rect x="341.5" y="1131" width="29.5" height="25" rx="6" stroke="#808080" stroke-width="2.7" fill="#fff"/><path d="M348,1125 H370.5 A6,6 0 0 1 376.5,1131 V1144.5 A6,6 0 0 1 371,1150.5" stroke="#808080" stroke-width="2.7" fill="none" stroke-linecap="round" stroke-linejoin="round" /><path d="M341.5,1140.5 H371 M347,1148.8 H350 M353,1148.8 H359" stroke="#808080" stroke-width="2.7" fill="none" stroke-linecap="round" stroke-linejoin="round" /><rect x="343.3" y="1236.4" width="30.8" height="34.2" rx="7" stroke="#808080" stroke-width="2.7" fill="none"/><path d="M352.3,1236.8 V1253 L356.8,1249 L361.3,1253 V1236.8" stroke="#808080" stroke-width="2.7" fill="none" stroke-linecap="round" stroke-linejoin="round" /><path d="M361.5,1258.5 H367.5 M352.8,1264 H367.5" stroke="#808080" stroke-width="2.7" fill="none" stroke-linecap="round" stroke-linejoin="round" /><path d="M348,1349 H369.5 A4.3,4.3 0 0 1 373.8,1353.3 V1381 Q371,1386 366,1381.5 Q361,1377 358.8,1381.5 Q354.5,1387.5 350.5,1381.5 Q347.5,1377.5 343.9,1381 V1353.3 A4.3,4.3 0 0 1 348,1349 Z" fill="#c97474"/><path d="M350,1358.2 H351.5 M355,1358.2 H366.5 M350,1365 H351.5 M355,1365 H366.5" stroke="#8b1010" stroke-width="2.2" fill="none" stroke-linecap="round" stroke-linejoin="round" /><circle cx="358.8" cy="1550" r="17.5" stroke="#808080" stroke-width="2.9" fill="none"/><path d="M358.8,1541.5 V1550.5" stroke="#808080" stroke-width="3.0" fill="none" stroke-linecap="round" stroke-linejoin="round" /><circle cx="358.8" cy="1556.3" r="1.6" stroke="#808080" stroke-width="0" fill="#808080"/><path d="M828.5,713.7 Q830,713.7 831.5,714.8 L844.5,724.6 Q846.8,726.3 846.3,729.1 L843.6,744.5 Q843,748.3 839.3,748.3 H817.8 Q814,748.3 813.4,744.5 L810.8,729.1 Q810.3,726.3 812.5,724.6 L825.5,714.8 Q827,713.7 828.5,713.7 Z M828.5,728.5 A4.5,4.5 0 1 0 828.5,737.5 A4.5,4.5 0 1 0 828.5,728.5 Z" fill="#961616"/><rect x="813.5" y="835.3" width="29.3" height="35" rx="6" stroke="#808080" stroke-width="2.7" fill="none"/><path d="M813.5,857.7 H842.8 M820.3,844.3 H835.5 M820.3,850.7 H830.5" stroke="#808080" stroke-width="2.6" fill="none" stroke-linecap="round" stroke-linejoin="round" /><path d="M829,958.5 A17.5,17.5 0 1 0 846.5,976" stroke="#808080" stroke-width="2.7" fill="none" stroke-linecap="round" stroke-linejoin="round" /><path d="M845.8,958.6 L831,973.4 M831,962.2 V973.4 H842.2" stroke="#808080" stroke-width="2.7" fill="none" stroke-linecap="round" stroke-linejoin="round" /><g transform="translate(806,1141) scale(1.72)"><path d="M21.97 18.33C21.97 18.69 21.89 19.06 21.72 19.42C21.55 19.78 21.33 20.12 21.04 20.44C20.55 20.98 20.01 21.37 19.4 21.62C18.8 21.87 18.15 22 17.45 22C16.43 22 15.34 21.76 14.19 21.27C13.04 20.78 11.89 20.12 10.75 19.29C9.6 18.45 8.51 17.52 7.47 16.49C6.44 15.45 5.51 14.36 4.68 13.22C3.86 12.08 3.2 10.94 2.72 9.81C2.24 8.67 2 7.58 2 6.54C2 5.86 2.12 5.21 2.36 4.61C2.6 4 2.98 3.44 3.51 2.94C4.15 2.31 4.85 2 5.59 2C5.87 2 6.15 2.06 6.4 2.18C6.66 2.3 6.89 2.48 7.07 2.74L9.39 6.01C9.57 6.26 9.7 6.49 9.79 6.71C9.88 6.92 9.93 7.13 9.93 7.32C9.93 7.56 9.86 7.8 9.72 8.03C9.59 8.26 9.4 8.5 9.16 8.74L8.4 9.53C8.29 9.64 8.24 9.77 8.24 9.93C8.24 10.01 8.25 10.08 8.27 10.16C8.3 10.24 8.33 10.3 8.35 10.36C8.53 10.69 8.84 11.12 9.28 11.64C9.73 12.16 10.21 12.69 10.73 13.22C11.27 13.75 11.79 14.24 12.32 14.69C12.84 15.13 13.27 15.43 13.61 15.61C13.66 15.63 13.72 15.66 13.79 15.69C13.87 15.72 13.95 15.73 14.04 15.73C14.21 15.73 14.34 15.67 14.45 15.56L15.21 14.81C15.46 14.56 15.7 14.37 15.93 14.25C16.16 14.11 16.39 14.04 16.64 14.04C16.83 14.04 17.03 14.08 17.25 14.17C17.47 14.26 17.7 14.39 17.95 14.56L21.26 16.91C21.52 17.09 21.7 17.3 21.81 17.55C21.91 17.8 21.97 18.05 21.97 18.33Z" stroke="#808080" stroke-width="1.55" fill="none" stroke-miterlimit="10"/></g><g transform="translate(806,1263) scale(1.72)"><path d="M21.97 18.33C21.97 18.69 21.89 19.06 21.72 19.42C21.55 19.78 21.33 20.12 21.04 20.44C20.55 20.98 20.01 21.37 19.4 21.62C18.8 21.87 18.15 22 17.45 22C16.43 22 15.34 21.76 14.19 21.27C13.04 20.78 11.89 20.12 10.75 19.29C9.6 18.45 8.51 17.52 7.47 16.49C6.44 15.45 5.51 14.36 4.68 13.22C3.86 12.08 3.2 10.94 2.72 9.81C2.24 8.67 2 7.58 2 6.54C2 5.86 2.12 5.21 2.36 4.61C2.6 4 2.98 3.44 3.51 2.94C4.15 2.31 4.85 2 5.59 2C5.87 2 6.15 2.06 6.4 2.18C6.66 2.3 6.89 2.48 7.07 2.74L9.39 6.01C9.57 6.26 9.7 6.49 9.79 6.71C9.88 6.92 9.93 7.13 9.93 7.32C9.93 7.56 9.86 7.8 9.72 8.03C9.59 8.26 9.4 8.5 9.16 8.74L8.4 9.53C8.29 9.64 8.24 9.77 8.24 9.93C8.24 10.01 8.25 10.08 8.27 10.16C8.3 10.24 8.33 10.3 8.35 10.36C8.53 10.69 8.84 11.12 9.28 11.64C9.73 12.16 10.21 12.69 10.73 13.22C11.27 13.75 11.79 14.24 12.32 14.69C12.84 15.13 13.27 15.43 13.61 15.61C13.66 15.63 13.72 15.66 13.79 15.69C13.87 15.72 13.95 15.73 14.04 15.73C14.21 15.73 14.34 15.67 14.45 15.56L15.21 14.81C15.46 14.56 15.7 14.37 15.93 14.25C16.16 14.11 16.39 14.04 16.64 14.04C16.83 14.04 17.03 14.08 17.25 14.17C17.47 14.26 17.7 14.39 17.95 14.56L21.26 16.91C21.52 17.09 21.7 17.3 21.81 17.55C21.91 17.8 21.97 18.05 21.97 18.33Z" stroke="#808080" stroke-width="1.55" fill="none" stroke-miterlimit="10"/></g><path d="M834.5,1270.5 H846 V1280" stroke="#808080" stroke-width="2.6" fill="none" stroke-linecap="round" stroke-linejoin="round" /><path d="M811.5,1401 A28,28 0 0 1 845,1401" stroke="#808080" stroke-width="2.7" fill="none" stroke-linecap="round" stroke-linejoin="round" /><path d="M816.5,1408.2 A20,20 0 0 1 840,1408.2" stroke="#808080" stroke-width="2.7" fill="none" stroke-linecap="round" stroke-linejoin="round" /><path d="M821.5,1415.2 A12,12 0 0 1 835,1415.2" stroke="#808080" stroke-width="2.7" fill="none" stroke-linecap="round" stroke-linejoin="round" /><path d="M826,1420.5 H830.5" stroke="#808080" stroke-width="2.7" fill="none" stroke-linecap="round" stroke-linejoin="round" /><path d="M816,1533 A12.3,12.3 0 0 1 840.6,1533" stroke="#808080" stroke-width="2.7" fill="none" stroke-linecap="round" stroke-linejoin="round" /><path d="M812.5,1536.5 H844 M815.5,1541.5 H841 M821,1546.5 H835.5" stroke="#808080" stroke-width="2.5" fill="none" stroke-linecap="round" stroke-linejoin="round" /><circle cx="828.3" cy="1511.5" r="1.4" stroke="#808080" stroke-width="0" fill="#808080"/><circle cx="816" cy="1516.5" r="1.4" stroke="#808080" stroke-width="0" fill="#808080"/><circle cx="840.5" cy="1516.5" r="1.4" stroke="#808080" stroke-width="0" fill="#808080"/><circle cx="810.5" cy="1527.5" r="1.4" stroke="#808080" stroke-width="0" fill="#808080"/><circle cx="846" cy="1527.5" r="1.4" stroke="#808080" stroke-width="0" fill="#808080"/><path d="M827,1636 H817.5 A6.5,6.5 0 0 0 811,1642.5 V1654.5 A6.5,6.5 0 0 0 817.5,1661 H838 A6.5,6.5 0 0 0 844.5,1654.5 V1652" stroke="#808080" stroke-width="2.6" fill="none" stroke-linecap="round" stroke-linejoin="round" /><path d="M828,1661 V1668.5 M822,1668.8 H834" stroke="#808080" stroke-width="2.6" fill="none" stroke-linecap="round" stroke-linejoin="round" /><path d="M833.5,1633 H842 A4.5,4.5 0 0 1 846.5,1637.5 V1644 A4.5,4.5 0 0 1 842,1648.5 H837 L832,1653 V1648 A4.5,4.5 0 0 1 829,1644 V1637.5 A4.5,4.5 0 0 1 833.5,1633 Z" stroke="#808080" stroke-width="2.6" fill="#fff" stroke-linecap="round" stroke-linejoin="round" /><circle cx="834.5" cy="1640.8" r="1.1" stroke="#808080" stroke-width="0" fill="#808080"/><circle cx="838" cy="1640.8" r="1.1" stroke="#808080" stroke-width="0" fill="#808080"/><circle cx="841.5" cy="1640.8" r="1.1" stroke="#808080" stroke-width="0" fill="#808080"/><path d="M828,1820.5 L846,1829 V1834.5 H810 V1829 Z" stroke="#808080" stroke-width="2.6" fill="none" stroke-linecap="round" stroke-linejoin="round" /><circle cx="828" cy="1828.5" r="2.3" stroke="#808080" stroke-width="2.2" fill="none"/><path d="M814.5,1835 V1849 M821.5,1835 V1849 M828,1835 V1849 M834.5,1835 V1849 M841.5,1835 V1849" stroke="#808080" stroke-width="2.6" fill="none" stroke-linecap="round" stroke-linejoin="round" /><path d="M811,1849.8 H845 M808.5,1855.5 H847.5" stroke="#808080" stroke-width="2.6" fill="none" stroke-linecap="round" stroke-linejoin="round" /><path d="M2513.5,775.0 V796.5" stroke="#aee8a6" stroke-width="3" stroke-linecap="round"/><path d="M2504.2,791.0 L2513.5,800.8 L2523,791.0" stroke="#3fcf45" stroke-width="3.2" fill="none" stroke-linecap="round" stroke-linejoin="round"/><path d="M2513.5,909.5 V930.5" stroke="#f7a3a3" stroke-width="3" stroke-linecap="round"/><path d="M2504.2,913.5 L2513.5,903.7 L2523,913.5" stroke="#ee1c1c" stroke-width="3.2" fill="none" stroke-linecap="round" stroke-linejoin="round"/><path d="M2513.5,1038.0 V1059.0" stroke="#f7a3a3" stroke-width="3" stroke-linecap="round"/><path d="M2504.2,1042.0 L2513.5,1032.2 L2523,1042.0" stroke="#ee1c1c" stroke-width="3.2" fill="none" stroke-linecap="round" stroke-linejoin="round"/><path d="M2513.5,1160.5 V1182.0" stroke="#aee8a6" stroke-width="3" stroke-linecap="round"/><path d="M2504.2,1176.5 L2513.5,1186.3 L2523,1176.5" stroke="#3fcf45" stroke-width="3.2" fill="none" stroke-linecap="round" stroke-linejoin="round"/><path d="M2513.5,1295.0 V1316.0" stroke="#f7a3a3" stroke-width="3" stroke-linecap="round"/><path d="M2504.2,1299.0 L2513.5,1289.2 L2523,1299.0" stroke="#ee1c1c" stroke-width="3.2" fill="none" stroke-linecap="round" stroke-linejoin="round"/><path d="M2513.5,1417.5 V1439.0" stroke="#aee8a6" stroke-width="3" stroke-linecap="round"/><path d="M2504.2,1433.5 L2513.5,1443.3 L2523,1433.5" stroke="#3fcf45" stroke-width="3.2" fill="none" stroke-linecap="round" stroke-linejoin="round"/><path d="M2513.5,1546.0 V1567.5" stroke="#aee8a6" stroke-width="3" stroke-linecap="round"/><path d="M2504.2,1562.0 L2513.5,1571.8 L2523,1562.0" stroke="#3fcf45" stroke-width="3.2" fill="none" stroke-linecap="round" stroke-linejoin="round"/><path d="M2513.5,1680.5 V1701.5" stroke="#f7a3a3" stroke-width="3" stroke-linecap="round"/><path d="M2504.2,1684.5 L2513.5,1674.7 L2523,1684.5" stroke="#ee1c1c" stroke-width="3.2" fill="none" stroke-linecap="round" stroke-linejoin="round"/><path d="M2513.5,1803.0 V1824.5" stroke="#aee8a6" stroke-width="3" stroke-linecap="round"/><path d="M2504.2,1819.0 L2513.5,1828.8 L2523,1819.0" stroke="#3fcf45" stroke-width="3.2" fill="none" stroke-linecap="round" stroke-linejoin="round"/><defs><clipPath id="av"><circle cx="2847.9" cy="377.9" r="42.3"/></clipPath></defs><g clip-path="url(#av)"><rect x="2800" y="330" width="100" height="100" fill="#d4d4d4"/><rect x="2860" y="335" width="14" height="40" fill="#e6e6e6"/><path d="M2805,362 L2824,358 L2826,382 L2805,386 Z" fill="#5c5c5c"/><path d="M2869,356 Q2876,348 2884,354 L2887,372 L2872,372 Z" fill="#3a3a3a"/><path d="M2872,372 L2892,372 L2892,400 L2875,395 Z" fill="#dedede"/><path d="M2800,392 Q2818,378 2838,380 L2848,392 L2860,380 Q2880,378 2895,392 V430 H2800 Z" fill="#a2a2a2"/><path d="M2812,400 L2822,420 M2880,398 L2872,420" stroke="#777" stroke-width="3"/><ellipse cx="2846" cy="361" rx="13.5" ry="17" fill="#4a4a4a"/><path d="M2846,346 Q2856,348 2858,362 Q2857,374 2848,378 Z" fill="#8a8a8a"/><path d="M2832,352 Q2834,338 2846,338 Q2859,338 2860,352 Q2853,343 2846,343 Q2838,343 2832,352 Z" fill="#262626"/><path d="M2836,376 L2846,390 L2858,376 L2856,384 L2846,394 L2838,384 Z" fill="#333"/></g></svg>
</body></html>
